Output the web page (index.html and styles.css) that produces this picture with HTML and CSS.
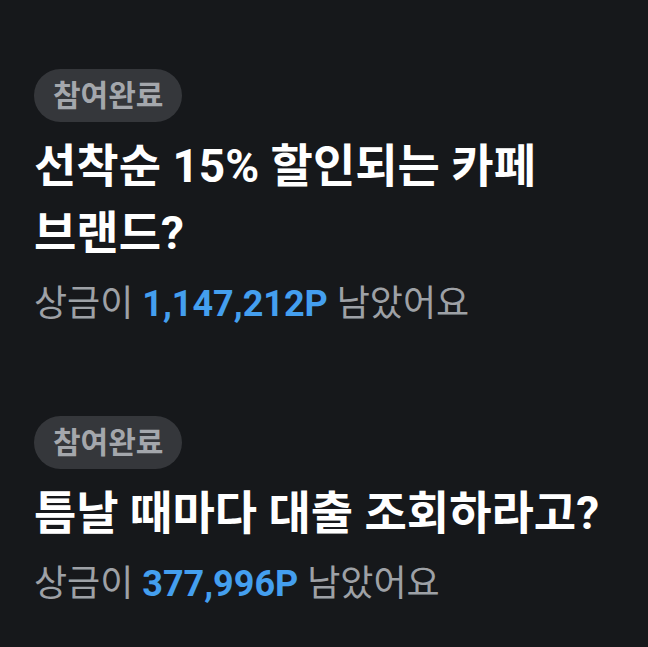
FILE: index.html
```html
<!DOCTYPE html>
<html lang="ko">
<head>
  <meta charset="UTF-8">
  <title>퀴즈 목록</title>
  <meta name="viewport" content="width=device-width, initial-scale=1.0">
  <link rel="stylesheet" href="styles.css">
</head>
<body>
  <div class="quiz-list">
    <div class="quiz">
      <span class="badge">참여완료</span>
      <div class="title">선착순 15% 할인되는 카페<br>브랜드?</div>
      <div class="prize">상금이 <b>1,147,212P</b> 남았어요</div>
    </div>
    <div class="quiz">
      <span class="badge">참여완료</span>
      <div class="title">틈날 때마다 대출 조회하라고?</div>
      <div class="prize">상금이 <b>377,996P</b> 남았어요</div>
    </div>
  </div>
</body>
</html>
```

FILE: styles.css
```css
body { margin: 0; background: #16181b; font-family: Roboto, "Noto Sans CJK KR", sans-serif; }
.quiz-list { padding: 69px 20px 0 34px; }
.quiz { margin-bottom: 90px; }
.quiz:last-child { margin-bottom: 0; }
.badge { display: inline-block; height: 53px; line-height: 53px; padding: 0 19px; border-radius: 27px; background: #35373b; color: #a4a7ac; font-size: 30px; font-weight: 700; }
.title { margin-top: 11px; color: #fff; font-size: 46px; line-height: 67px; font-weight: 700; }
.prize { margin-top: 15px; color: #9ea1a6; font-size: 36px; line-height: 44px; }
.prize b { color: #449fef; font-weight: 700; }
```
